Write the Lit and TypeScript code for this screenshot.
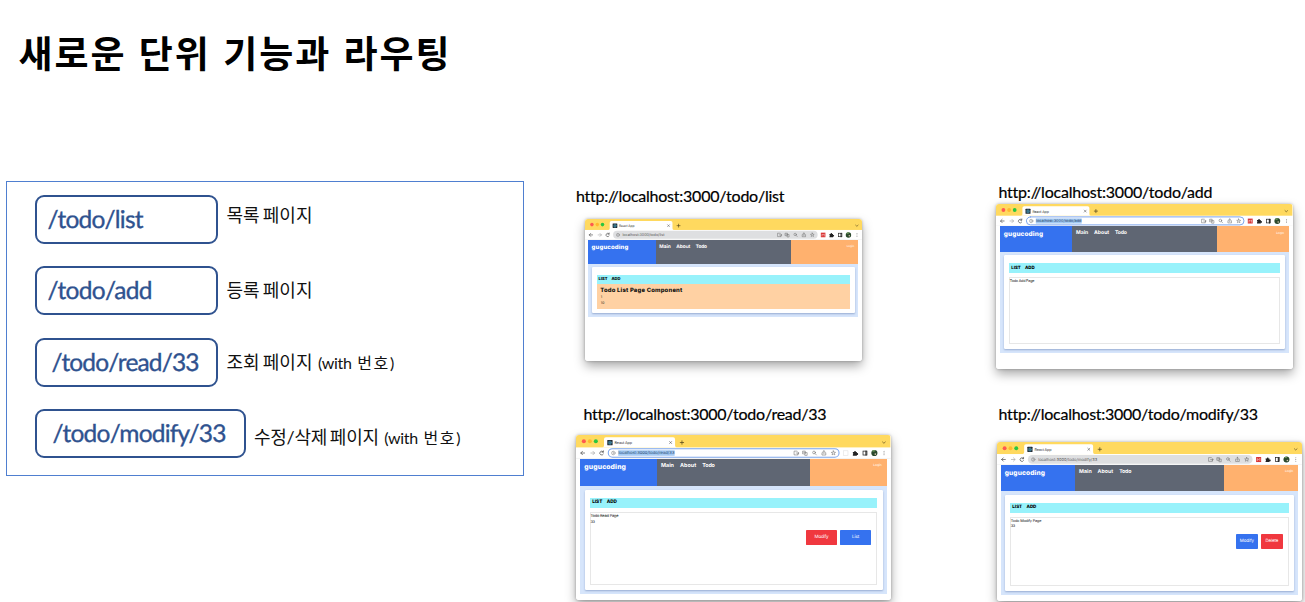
import { LitElement, html, svg, css, nothing } from "lit";
import { customElement, property } from "lit/decorators.js";
import { styleMap } from "lit/directives/style-map.js";

/** One line of text tracked so that it fills a given width. */
@customElement("fit-text")
class FitText extends LitElement {
  static styles = css`
    :host { display: block; white-space: pre; }
    .line { display: inline-block; }
  `;
  @property() text = "";
  @property({ type: Number }) width = 0;

  updated() {
    const line = this.renderRoot.querySelector<HTMLElement>(".line")!;
    line.style.letterSpacing = "0px";
    const natural = line.getBoundingClientRect().width;
    const gaps = [...this.text].length - 1;
    if (this.width && gaps > 0) line.style.letterSpacing = (this.width - natural) / gaps + "px";
  }
  render() {
    return html`<span class="line">${this.text}</span>`;
  }
}

interface Shot {
  caption: string;
  captionWidth: number;
  captionLeft: number;
  captionTop: number;
  left: number;
  gap: number;
  width: number;
  height: number;
  url: string;
  urlWidth: number;
  focused: boolean;
  panelHeight: number;
  page: "list" | "add" | "read" | "modify";
}

/** A small browser window; 1em is one unit of its 296.4-unit wide layout. */
@customElement("browser-window")
class BrowserWindow extends LitElement {
  @property({ attribute: false }) shot!: Shot;

  static styles = css`
    :host { display: block; text-rendering: geometricPrecision; }
    * { box-sizing: border-box; }
    .win {
      background: #fff; border-radius: 3px; overflow: hidden;
      font-family: Inter, "Liberation Sans", sans-serif;
      display: flex; flex-direction: column;
    }
    .frame { border-radius: 3px; box-shadow: 0 5px 11px rgba(0,0,0,.34), 0 0 3px rgba(0,0,0,.28); }
    svg { display: block; width: 100%; }
    .chrome { flex: none; height: 22.3em; }
    .content { margin: 0 4em 0 3.8em; flex: none; }
    .head { display: flex; height: 25.4em; color: #fff; }
    .logo { width: 72.4em; background: #3572ef; padding: 4.2em 0 0 3.7em; }
    .logo fit-text { font-size: 6.4em; line-height: 8px; font-weight: 800; }
    .nav { flex: 1; background: #5f6673; padding: 4.2em 0 0 3.6em; display: flex; gap: 5.8em; }
    .nav fit-text { font-size: 5.1em; line-height: 7px; font-weight: 700; }
    .login { width: 72em; background: #ffb16e; padding: 4.3em 4.6em 0 0; display: flex; justify-content: flex-end; }
    .login fit-text { font-size: 3.1em; line-height: 5px; }
    .panel { background: #d6e5fb; padding: 3.6em 3.8em 4em 4em; }
    .card {
      height: 100%; background: #fff; border-radius: 1.2em; padding: 8em 5em 4.7em;
      box-shadow: 0 1px 2px rgba(60,90,150,.4); display: flex; flex-direction: column;
    }
    .menu { height: 9.8em; flex: none; background: #98f2fb; padding: 0 0 0 2.1em; display: flex; gap: 4.2em; align-items: center; }
    .menu fit-text { font-size: 4.4em; line-height: 1.2; font-weight: 800; }
    .peach { flex: 1; background: #ffd1a3; padding: 3.9em 0 0 4em; color: #111; }
    .peach .h { font-size: 6.3em; line-height: 8px; font-weight: 800; }
    .peach .n { font-size: 3.6em; line-height: 5.3px; margin-left: .15em; }
    .box {
      flex: 1; margin-top: 3.8em; border: 1px solid #e7e7e7; border-bottom-width: 1.3px;
      color: #111;
    }
    .box .t { font-size: 3.7em; line-height: 5.3px; margin-left: -.1em; }
    .btns { display: flex; justify-content: flex-end; gap: 3.4em; padding-right: 5em; margin-top: 5.6em; }
    .btn { color: #fff; height: 13.9em; border-radius: .8em; display: flex; align-items: center; justify-content: center; }
    .btn fit-text { font-size: 4.3em; line-height: 1.2; }
    .blue { background: #3572ef; }
    .red { background: #f0383f; }
    .wide { width: 28.9em; }
    .slim { width: 21em; }
  `;

  private chrome() {
    const s = this.shot;
    const k = s.width / 296.4;
    return svg`
      <svg class="chrome" viewBox="0 0 296.4 22.3" preserveAspectRatio="none" fill="none" stroke-linecap="round">
        <rect width="296.4" height="11.7" fill="#ffd95f"/>
        <circle cx="7.4" cy="6" r="1.9" fill="#ff5a50"/>
        <circle cx="13.1" cy="6" r="1.9" fill="#ffb92e"/>
        <circle cx="18.7" cy="6" r="1.9" fill="#2ac641"/>
        <path d="M25 11.7Q26.4 11.7 26.4 10V4Q26.4 2.2 28.2 2.2H91.6Q93.4 2.2 93.4 4V10Q93.4 11.7 94.8 11.7Z" fill="#fff"/>
        <rect x="29.5" y="4.7" width="5" height="5" rx=".5" fill="#22272e"/>
        <g stroke="#4fb4d8" stroke-width=".3"><ellipse cx="32" cy="7.2" rx="1.8" ry=".7"/><ellipse cx="32" cy="7.2" rx="1.8" ry=".7" transform="rotate(60 32 7.2)"/><ellipse cx="32" cy="7.2" rx="1.8" ry=".7" transform="rotate(120 32 7.2)"/></g>
        <text x="36.4" y="8.6" font-size="3.6" fill="#333" textLength="16.5">React App</text>
        <path d="M88.2 6.1l2 2m0-2l-2 2" stroke="#444" stroke-width=".5"/>
        <path d="M98.3 7.1h3.2M99.9 5.5v3.2" stroke="#493d18" stroke-width=".65"/>
        <path d="M289 6.6l1.3 1.2 1.3-1.2" stroke="#5b4b1c" stroke-width=".65"/>
        <g stroke="#444" stroke-width=".65">
          <path d="M8.1 17H4.6M6.1 15.4L4.5 17l1.6 1.6"/>
          <path d="M14 17h3.5M16 15.4l1.6 1.6-1.6 1.6" stroke="#a5a5a5"/>
          <path d="M25.6 15.9A1.8 1.8 0 1 0 25.8 18M25.8 14.9v1.3h-1.3"/>
        </g>
        ${s.focused
          ? svg`<rect x="30.4" y="12.9" width="217.6" height="8" rx="4" fill="#fff" stroke="#7ba5ec" stroke-width="1"/>
                <rect x="39.8" y="14.4" width=${s.urlWidth / k + 0.4} height="5.2" fill="#a3c9f3"/>`
          : svg`<rect x="30" y="12.6" width="218.4" height="8.6" rx="4.3" fill="#dedfe1"/>`}
        <circle cx="35.2" cy="17" r="1.7" stroke="#666" stroke-width=".4"/>
        <path d="M35.2 16.8v1M35.2 16v.1" stroke="#666" stroke-width=".45"/>
        <text x="40" y="18.4" font-size="3.9" textLength=${s.urlWidth / k} lengthAdjust="spacingAndGlyphs" fill=${s.focused ? "#1d3f68" : "#555"}>${s.url}</text>
        <g stroke="#666" stroke-width=".5">
          <path d="M208.2 15.2h-2.6v3.6h3.8v-1.3M207.6 17h2.4M209 16l1.1 1-1.1 1"/>
          <path d="M214 15.2h2.2v2.6H214zM216 16.6h1.9v2.6h-2.2v-1.3M214.6 16.3h1"/>
          <circle cx="224.4" cy="16.5" r="1.3"/><path d="M225.4 17.5l1.2 1.3"/>
          <path d="M232.6 16.7h-.7v2.2h3.6v-2.2h-.7M233.7 17.7v-2.8M232.9 15.6l.8-.8.8.8"/>
          <path d="M242.7 15l.6 1.3 1.4.1-1.1.9.4 1.4-1.3-.7-1.3.7.4-1.4-1.1-.9 1.4-.1z"/>
        </g>
        ${s.page === "read"
          ? svg`<rect x="252.2" y="14.9" width="4.2" height="4.2" stroke="#ddd" stroke-width=".5"/>`
          : svg`<rect x="251.8" y="14.6" width="4.9" height="4.9" fill="#d93434"/><path d="M253 18.2v-2l1.2 1 1.3-1.3v2.3" stroke="#fff" stroke-width=".45"/>`}
        <path d="M261 16.1h1.3a.8.8 0 1 1 1.5 0h1v1.1a.8.8 0 1 1 0 1.4v.9H261v-1a.8.8 0 0 0 0-1.4z" fill="#222"/>
        <rect x="270.6" y="15.2" width="3.7" height="3.7" stroke="#222" stroke-width=".7"/><path d="M273.4 15.2v3.7" stroke="#222" stroke-width="1.1"/>
        <circle cx="281.3" cy="17" r="2.9" fill="#2c4a2d"/><path d="M279 15.4a2.8 2.8 0 0 1 3-1l-.7 1.5z" fill="#6d9b5d"/><circle cx="282.2" cy="18" r=".8" fill="#d3c3ad"/>
        <g fill="#444"><circle cx="290.4" cy="15.4" r=".45"/><circle cx="290.4" cy="17" r=".45"/><circle cx="290.4" cy="18.6" r=".45"/></g>
        <path d="M0 22.1h296.4" stroke="#e4e4e4" stroke-width=".4"/>
      </svg>`;
  }

  private body(k: number) {
    const p = this.shot.page;
    if (p === "list")
      return html`<div class="peach">
        <fit-text class="h" text="Todo List Page Component" width="82"></fit-text>
        <div class="n">1</div>
        <div class="n">10</div>
      </div>`;
    const title = { add: "Todo Add Page", read: "Todo Read Page", modify: "Todo Modify Page" }[p];
    const tw = { add: 24.7, read: 28, modify: 30.6 }[p];
    return html`<div class="box">
      <fit-text class="t" text=${title} width=${tw}></fit-text>
      ${p === "add" ? nothing : html`<fit-text class="t" text="33" width="4.4"></fit-text>`}
      ${p === "read"
        ? html`<div class="btns">
            <div class="btn red wide"><fit-text text="Modify" width=${14}></fit-text></div>
            <div class="btn blue wide"><fit-text text="List" width=${7.4}></fit-text></div>
          </div>`
        : nothing}
      ${p === "modify"
        ? html`<div class="btns">
            <div class="btn blue slim"><fit-text text="Modify" width=${13.8 * k}></fit-text></div>
            <div class="btn red slim"><fit-text text="Delete" width=${12.6 * k}></fit-text></div>
          </div>`
        : nothing}
    </div>`;
  }

  render() {
    const s = this.shot;
    const k = s.width / 296.4;
    return html`<div class="frame" style=${styleMap({ width: s.width + "px", fontSize: k + "px" })}>
      <div class="win" style=${styleMap({ height: s.height + "px" })}>
        ${this.chrome()}
        <div class="content">
          <div class="head">
            <div class="logo"><fit-text text="gugucoding" width=${39.2 * k}></fit-text></div>
            <div class="nav">
              <fit-text text="Main" width=${12.2 * k}></fit-text>
              <fit-text text="About" width=${15.2 * k}></fit-text>
              <fit-text text="Todo" width=${11.8 * k}></fit-text>
            </div>
            <div class="login"><fit-text text="Login" width=${8 * k}></fit-text></div>
          </div>
          <div class="panel" style=${styleMap({ height: s.panelHeight + "px" })}>
            <div class="card">
              <div class="menu">
                <fit-text text="LIST" width=${9.6 * k}></fit-text>
                <fit-text text="ADD" width=${9.6 * k}></fit-text>
              </div>
              ${this.body(k)}
            </div>
          </div>
        </div>
      </div>
    </div>`;
  }
}

const shots: Shot[] = [
  { caption: "http://localhost:3000/todo/list", captionWidth: 208, captionLeft: 12, captionTop: 185.5, left: 20.6, gap: 13.5, width: 277.6, height: 142, url: "localhost:3000/todo/list", urlWidth: 42, focused: false, panelHeight: 53.4, page: "list" },
  { caption: "http://localhost:3000/todo/add", captionWidth: 213.5, captionLeft: 14.5, captionTop: 182, left: 12.3, gap: 2, width: 296.4, height: 164.7, url: "localhost:3000/todo/add", urlWidth: 45.5, focused: true, panelHeight: 101.3, page: "add" },
  { caption: "http://localhost:3000/todo/read/33", captionWidth: 242.5, captionLeft: 19.5, captionTop: 13, left: 12.4, gap: 11.2, width: 314.4, height: 164.5, url: "localhost:3000/todo/read/33", urlWidth: 56, focused: true, panelHeight: 108, page: "read" },
  { caption: "http://localhost:3000/todo/modify/33", captionWidth: 259, captionLeft: 14.5, captionTop: 13, left: 13, gap: 18, width: 305, height: 159, url: "localhost:3000/todo/modify/33", urlWidth: 59, focused: false, panelHeight: 104.3, page: "modify" },
];

const routes = [
  { path: "/todo/list", pathWidth: 96, pad: 11, box: 183, note: [["목록 페이지", 86]], gap: 9, up: -8 },
  { path: "/todo/add", pathWidth: 105, pad: 11, box: 183, note: [["등록 페이지", 86]], gap: 9, up: -1 },
  { path: "/todo/read/33", pathWidth: 148, pad: 15, box: 183, note: [["조회 페이지", 86], ["(with", 34], ["번호)", 37]], gap: 9, up: 1 },
  { path: "/todo/modify/33", pathWidth: 174, pad: 16, box: 211, note: [["수정/삭제 페이지", 125], ["(with", 34], ["번호)", 37]], gap: 8.5, up: 8 },
] as const;

@customElement("app-root")
class AppRoot extends LitElement {
  static styles = css`
    :host { display: block; width: 1305px; height: 602px; overflow: hidden; background: #fff; color: #000; }
    * { box-sizing: border-box; }
    .slide { display: grid; grid-template-columns: 564px 420px 321px; grid-template-rows: 391px 211px; }
    .left { grid-row: 1 / 3; }
    .title { margin: 0; height: 181px; padding: 24px 0 0 18.5px; font: 700 37px/56px "Noto Sans CJK KR", sans-serif; word-spacing: 2px; }
    .routes {
      margin-left: 6px; width: 518px; height: 295px; border: 1px solid #4f7fd0;
      padding: 12.6px 0 0 27.5px; display: flex; flex-direction: column; gap: 22.5px;
    }
    .route { display: flex; align-items: center; height: 49px; flex: none; }
    .path {
      height: 49px; border: 2px solid #2f528f; border-radius: 9px; color: #2f528f;
      font: 400 24.5px/45px Lato, sans-serif; flex: none; -webkit-text-stroke: .35px #2f528f;
      text-rendering: geometricPrecision;
    }
    .note { display: flex; gap: 5.5px; font: 400 18px/24px Lato, "Noto Sans CJK KR", sans-serif; align-items: baseline; word-spacing: -1.5px; color: #111; }
    .note .small { font-size: 16px; }
    .caption { font: 400 16px/20px Lato, sans-serif; -webkit-text-stroke: .2px #000; }
  `;

  render() {
    return html`<div class="slide">
      <div class="left">
        <h1 class="title"><fit-text text="새로운 단위 기능과 라우팅" width="431"></fit-text></h1>
        <div class="routes">
          ${routes.map(
            (r) => html`<div class="route">
              <div class="path" style=${styleMap({ width: r.box + "px", paddingLeft: r.pad + "px" })}>
                <fit-text text=${r.path} width=${r.pathWidth}></fit-text>
              </div>
              <div class="note" style=${styleMap({ marginLeft: r.gap + "px", marginTop: r.up + "px" })}>
                ${r.note.map(([t, w], i) => html`<fit-text class=${i ? "small" : ""} text=${t} width=${w}></fit-text>`)}
              </div>
            </div>`
          )}
        </div>
      </div>
      ${shots.map(
        (s) => html`<section style=${styleMap({ paddingTop: s.captionTop + "px" })}>
          <fit-text class="caption" style=${styleMap({ marginLeft: s.captionLeft + "px" })} text=${s.caption} width=${s.captionWidth}></fit-text>
          <browser-window style=${styleMap({ marginLeft: s.left + "px", marginTop: s.gap + "px" })} .shot=${s}></browser-window>
        </section>`
      )}
    </div>`;
  }
}
